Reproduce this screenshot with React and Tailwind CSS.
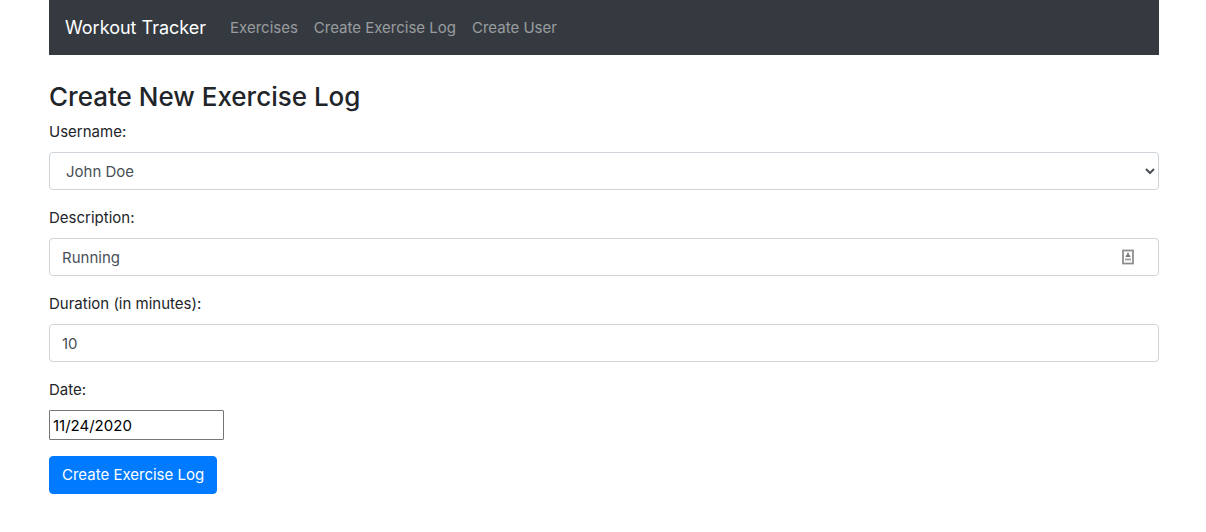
import { useState } from "react";

const control =
  "block h-[38px] w-full rounded border border-[#ced4da] bg-white px-3 text-[15px] text-[#495057] outline-none";

function Field({ id, label, children }) {
  return (
    <div className="mb-4">
      <label htmlFor={id} className="mb-2 block w-fit">
        {label}
      </label>
      {children}
    </div>
  );
}

function AutofillIcon() {
  return (
    <svg width="12" height="16" viewBox="0 0 12 16" fill="none" aria-hidden="true">
      <rect x="1" y="1.5" width="10" height="13" stroke="#8e8e8e" strokeWidth="1.8" />
      <path d="M5.200 3.800h1.600v1.700c.9.400 1.500 1.200 1.700 2.500h-5c.2-1.300.8-2.100 1.700-2.500z" fill="#777777" />
      <path d="M3 10.500h6" stroke="#a0a0a0" strokeWidth="2" />
    </svg>
  );
}

export default function App() {
  const [username, setUsername] = useState("John Doe");
  const [description, setDescription] = useState("Running");
  const [duration, setDuration] = useState("10");
  const [date, setDate] = useState("11/24/2020");

  return (
    <div className="pl-[49px] pr-[47px] font-['Inter','Liberation_Sans',sans-serif] text-[15px] leading-6 text-[#212529]">
      <nav className="flex h-[55px] items-center bg-[#343a40] px-4">
        <a href="#home" className="mr-4 text-lg leading-7 text-white">
          Workout Tracker
        </a>
        <ul className="flex text-white/50">
          <li><a href="#exercises" className="block p-2">Exercises</a></li>
          <li><a href="#create" className="block p-2">Create Exercise Log</a></li>
          <li><a href="#user" className="block p-2">Create User</a></li>
        </ul>
      </nav>
      <main className="pt-[26px]">
        <h3 className="mb-2 text-[26px] leading-[31px] font-medium">Create New Exercise Log</h3>
        <form onSubmit={(e) => e.preventDefault()}>
          <Field id="username" label="Username:">
            <select
              id="username"
              value={username}
              onChange={(e) => setUsername(e.target.value)}
              className={control}
            >
              <option>John Doe</option>
            </select>
          </Field>
          <Field id="description" label="Description:">
            <div className="relative">
              <input
                id="description"
                type="text"
                value={description}
                onChange={(e) => setDescription(e.target.value)}
                className={control}
              />
              <span className="pointer-events-none absolute inset-y-0 right-[25px] flex items-center">
                <AutofillIcon />
              </span>
            </div>
          </Field>
          <Field id="duration" label="Duration (in minutes):">
            <input
              id="duration"
              type="text"
              value={duration}
              onChange={(e) => setDuration(e.target.value)}
              className={control}
            />
          </Field>
          <Field id="date" label="Date:">
            <input
              id="date"
              type="text"
              value={date}
              onChange={(e) => setDate(e.target.value)}
              className="block h-[30px] w-[175px] rounded-[1px] border border-[#767676] px-[3px] text-black"
            />
          </Field>
          <button type="submit" className="h-[38px] rounded border border-[#007bff] bg-[#007bff] px-3 text-white">
            Create Exercise Log
          </button>
        </form>
      </main>
    </div>
  );
}
